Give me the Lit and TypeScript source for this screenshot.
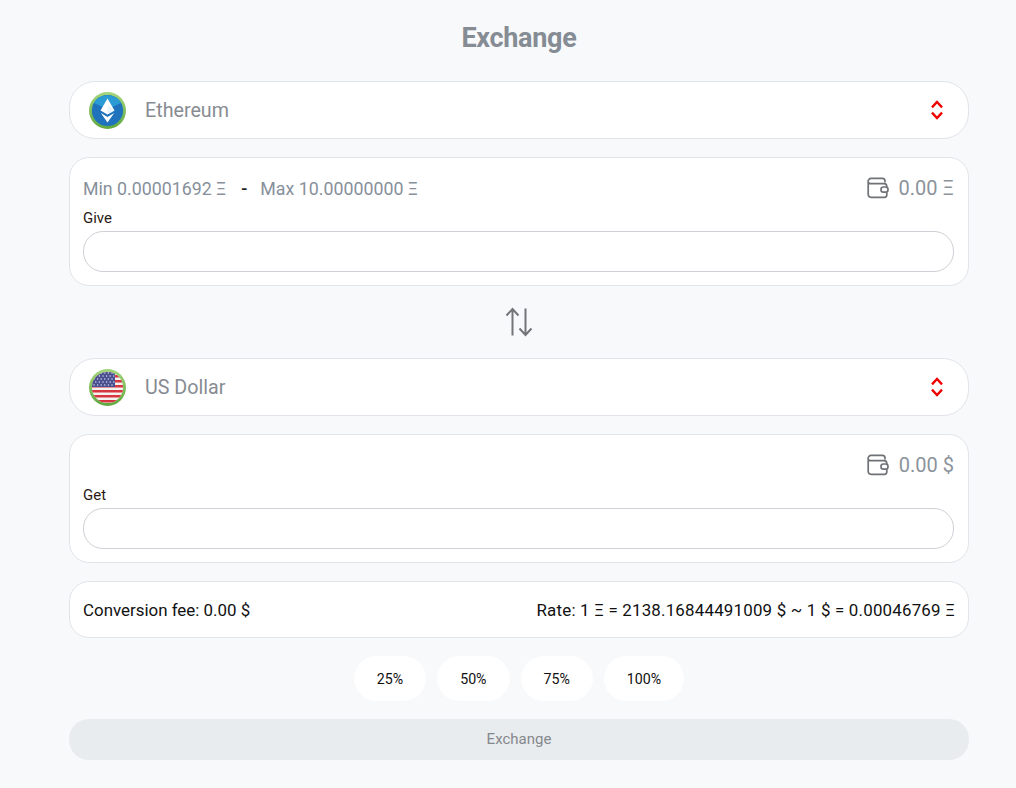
import { LitElement, html, css, svg } from "lit";
import { customElement } from "lit/decorators.js";

const ethIcon = html`<svg class="coin" viewBox="0 0 37 37">
  <defs><linearGradient id="ring" x1="0" y1="0" x2="0" y2="1"><stop offset="0" stop-color="#a5d67e"/><stop offset="1" stop-color="#5fa83f"/></linearGradient></defs>
  <circle cx="18.5" cy="18.5" r="18.5" fill="url(#ring)"/>
  <circle cx="18.5" cy="18.5" r="15.6" fill="#1f73bd"/>
  <path d="M5 11 A15.6 15.6 0 0 1 32 11 L18.5 17 Z" fill="#2b9bd6"/>
  <path d="M18.5 6.5 L25.5 18.5 L18.5 22.6 L11.5 18.5 Z" fill="#fff"/>
  <path d="M11.8 21 L18.5 25 L25.2 21 L18.5 30.5 Z" fill="#fff"/>
  <path d="M18.5 13 L25.5 18.5 L18.5 22.6 Z" fill="#dfeefa" opacity=".7"/>
</svg>`;

const stripes = [0, 1, 2, 3, 4, 5, 6].map(
  (i) => svg`<rect x="0" y="${1 + i * 5}" width="37" height="2.5" fill="#d8363f"/>`
);
const stars: unknown[] = [];
for (let r = 0; r < 5; r++)
  for (let c = 0; c < 6; c++)
    stars.push(svg`<circle cx="${5 + c * 3.6 + (r % 2) * 1.8}" cy="${4 + r * 3}" r=".75" fill="#d5d9ee"/>`);

const usIcon = html`<svg class="coin" viewBox="0 0 37 37">
  <defs>
    <linearGradient id="ring2" x1="0" y1="0" x2="0" y2="1"><stop offset="0" stop-color="#a5d67e"/><stop offset="1" stop-color="#5fa83f"/></linearGradient>
    <clipPath id="flagclip"><circle cx="18.5" cy="18.5" r="15.6"/></clipPath>
  </defs>
  <circle cx="18.5" cy="18.5" r="18.5" fill="url(#ring2)"/>
  <g clip-path="url(#flagclip)">
    <rect width="37" height="37" fill="#f4f1f1"/>
    ${stripes}
    <rect x="0" y="0" width="26" height="18" fill="#4a4f90"/>
    ${stars}
  </g>
</svg>`;

const chevrons = html`<svg class="chev" viewBox="0 0 12 20" fill="none" stroke="#f00000" stroke-width="2.3">
  <path d="M1 7.4 L6 2 L11 7.4"/>
  <path d="M1 12.6 L6 18 L11 12.6"/>
</svg>`;

const wallet = html`<svg class="wallet" viewBox="0 0 22 22" fill="none" stroke="#6f7276" stroke-width="1.7">
  <path d="M1.2 5 A3 3 0 0 1 4.2 1.4 H15.5 A2.6 2.6 0 0 1 18 4 V5.4 M1.2 5 V17.5 A3 3 0 0 0 4.2 20.3 H17.5 A2.4 2.4 0 0 0 19.8 18 V15.2 M1.2 5 A2.6 2.6 0 0 0 4 6.6 H17 A2.8 2.8 0 0 1 19.8 9.2 V10"/>
  <rect x="14" y="10" width="7" height="5.2" rx="2.4"/>
</svg>`;

const swap = html`<svg class="swap" viewBox="0 0 28 30" fill="none" stroke="#737578" stroke-width="2">
  <path d="M7.5 28.5 V2 M1.5 8.5 L7.5 2 L13.5 8.5"/>
  <path d="M20.5 1.5 V28 M14.5 21.5 L20.5 28 L26.5 21.5"/>
</svg>`;

@customElement("app-root")
export class AppRoot extends LitElement {
  static styles = css`
    :host {
      display: block;
      min-height: 788px;
      background: #f8f9fb;
      font-family: "Roboto", "Noto Sans", sans-serif;
      box-sizing: border-box;
      padding-left: 69px;
    }
    .page {
      width: 900px;
      padding: 0 0 28px;
      display: flex;
      flex-direction: column;
      gap: 18px;
    }
    h1 {
      margin: 0;
      height: 63px;
      font-size: 27px;
      font-weight: 700;
      color: #858c94;
      text-align: center;
      line-height: 76px;
      letter-spacing: -0.3px;
    }
    .select {
      height: 58px;
      box-sizing: border-box;
      background: #fff;
      border: 1px solid #e1e4e9;
      border-radius: 26px;
      display: flex;
      align-items: center;
      padding: 0 25px 0 19px;
      font-size: 19.7px;
      color: #878b92;
    }
    .coin { width: 37px; height: 37px; flex: none; margin-right: 19px; }
    .chev { width: 12px; height: 20px; margin-left: auto; }
    .card {
      background: #fff;
      border: 1px solid #e1e4e9;
      border-radius: 20px;
      padding: 14px 14px 13px 13px;
      display: flex;
      flex-direction: column;
    }
    .top {
      display: flex;
      align-items: center;
      height: 32px;
      font-size: 17.8px;
      color: #87909a;
    }
    .sep { color: #222; margin: 0 13px 0 15px; font-weight: 500; }
    .bal {
      margin-left: auto;
      display: flex;
      align-items: center;
      font-size: 20px;
      color: #8b939b;
    }
    .wallet { width: 22px; height: 22px; margin-right: 10px; }
    .label { font-size: 15px; color: #2a1a14; margin: 5px 0 4px; height: 18px; line-height: 18px; }
    input {
      display: block;
      width: 100%;
      height: 41px;
      box-sizing: border-box;
      border: 1px solid #cdd0d5;
      border-radius: 20px;
      background: #fff;
      outline: none;
    }
    .swapwrap {
      display: flex;
      justify-content: center;
      align-items: center;
      height: 36px;
    }
    .swap { width: 28px; height: 30px; }
    .fee {
      height: 57px;
      box-sizing: border-box;
      background: #fff;
      border: 1px solid #e1e4e9;
      border-radius: 20px;
      padding: 0 13px;
      display: flex;
      align-items: center;
      justify-content: space-between;
      font-size: 16.9px;
      color: #111;
    }
    .rate { letter-spacing: 0.2px; }
    .pills { display: flex; justify-content: center; gap: 11px; }
    .pill {
      height: 45px;
      min-width: 71px;
      padding: 0 23px;
      box-sizing: border-box;
      border: none;
      border-radius: 23px;
      background: #fff;
      font: inherit;
      font-size: 14.2px;
      color: #111;
    }
    .go {
      height: 41px;
      border: none;
      border-radius: 20px;
      background: #e9ecef;
      color: #85888c;
      font: inherit;
      font-size: 15px;
      padding: 0 0 2px;
    }
  `;

  render() {
    return html`<div class="page">
      <h1>Exchange</h1>
      <div class="select">${ethIcon}<span>Ethereum</span>${chevrons}</div>
      <div class="card">
        <div class="top">
          <span>Min 0.00001692 Ξ</span><span class="sep">-</span><span>Max 10.00000000 Ξ</span>
          <span class="bal">${wallet}0.00 Ξ</span>
        </div>
        <div class="label">Give</div>
        <input type="text" />
      </div>
      <div class="swapwrap">${swap}</div>
      <div class="select">${usIcon}<span>US Dollar</span>${chevrons}</div>
      <div class="card">
        <div class="top"><span class="bal">${wallet}0.00 $</span></div>
        <div class="label">Get</div>
        <input type="text" />
      </div>
      <div class="fee">
        <span>Conversion fee: 0.00 $</span>
        <span class="rate">Rate: 1 Ξ = 2138.16844491009 $ ~ 1 $ = 0.00046769 Ξ</span>
      </div>
      <div class="pills">
        <button class="pill">25%</button>
        <button class="pill">50%</button>
        <button class="pill">75%</button>
        <button class="pill">100%</button>
      </div>
      <button class="go">Exchange</button>
    </div>`;
  }
}
